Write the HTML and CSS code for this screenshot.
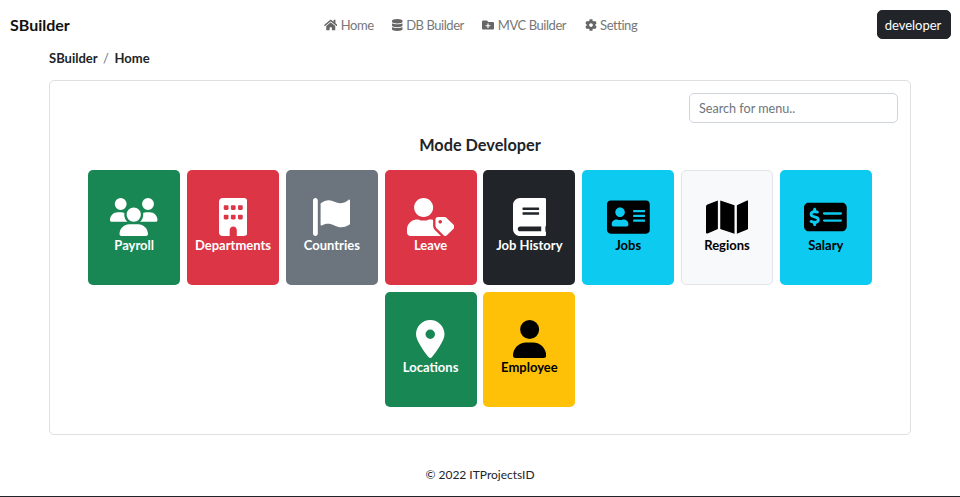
FILE: index.html
```html
<!DOCTYPE html>
<html lang="en">
<head>
<meta charset="utf-8">
<title>SBuilder</title>
<link rel="stylesheet" href="styles.css">
</head>
<body>
<nav class="navbar">
  <a class="brand">SBuilder</a>
  <ul class="menu">
    <li class="menu-item"><svg class="menu-icon" viewBox="0 0 576 512"><path d="M280.37 148.26L96 300.11V464a16 16 0 0 0 16 16l112.06-.29a16 16 0 0 0 15.92-16V368a16 16 0 0 1 16-16h64a16 16 0 0 1 16 16v95.64a16 16 0 0 0 16 16.05L464 480a16 16 0 0 0 16-16V300L295.67 148.26a12.19 12.19 0 0 0-15.3 0zM571.6 251.47L488 182.56V44.05a12 12 0 0 0-12-12h-56a12 12 0 0 0-12 12v72.61L318.47 43a48 48 0 0 0-61 0L4.34 251.47a12 12 0 0 0-1.6 16.9l25.5 31A12 12 0 0 0 45.15 301l235.22-193.74a12.19 12.19 0 0 1 15.3 0L530.9 301a12 12 0 0 0 16.9-1.6l25.5-31a12 12 0 0 0-1.7-16.93z"/></svg>Home</li>
    <li class="menu-item"><svg class="menu-icon" viewBox="0 0 448 512"><path d="M448 73.143v45.714C448 159.143 347.667 192 224 192S0 159.143 0 118.857V73.143C0 32.857 100.333 0 224 0s224 32.857 224 73.143zM448 176v102.857C448 319.143 347.667 352 224 352S0 319.143 0 278.857V176c48.125 33.143 136.208 48.572 224 48.572S399.874 209.143 448 176zm0 160v102.857C448 479.143 347.667 512 224 512S0 479.143 0 438.857V336c48.125 33.143 136.208 48.572 224 48.572S399.874 369.143 448 336z"/></svg>DB Builder</li>
    <li class="menu-item"><svg class="menu-icon" viewBox="0 0 512 512"><path d="M464,128H272L208,64H48A48,48,0,0,0,0,112V400a48,48,0,0,0,48,48H464a48,48,0,0,0,48-48V176A48,48,0,0,0,464,128ZM359.5,296a16,16,0,0,1-16,16h-64v64a16,16,0,0,1-16,16h-16a16,16,0,0,1-16-16V312h-64a16,16,0,0,1-16-16V280a16,16,0,0,1,16-16h64V200a16,16,0,0,1,16-16h16a16,16,0,0,1,16,16v64h64a16,16,0,0,1,16,16Z"/></svg>MVC Builder</li>
    <li class="menu-item"><svg class="menu-icon" viewBox="0 0 512 512"><path d="M487.4 315.7l-42.6-24.6c4.3-23.2 4.3-47 0-70.2l42.6-24.6c4.9-2.8 7.1-8.6 5.5-14-11.1-35.6-30-67.8-54.7-94.6-3.8-4.1-10-5.1-14.8-2.3L380.8 110c-17.9-15.4-38.5-27.3-60.8-35.1V25.8c0-5.6-3.9-10.5-9.4-11.7-36.7-8.2-74.3-7.8-109.2 0-5.5 1.2-9.4 6.1-9.4 11.7V75c-22.2 7.9-42.8 19.8-60.8 35.1L88.7 85.5c-4.9-2.8-11-1.9-14.8 2.3-24.7 26.7-43.6 58.9-54.7 94.6-1.7 5.4.6 11.2 5.5 14L67.3 221c-4.3 23.2-4.3 47 0 70.2l-42.6 24.6c-4.9 2.8-7.1 8.6-5.5 14 11.1 35.6 30 67.8 54.7 94.6 3.8 4.1 10 5.1 14.8 2.3l42.6-24.6c17.9 15.4 38.5 27.3 60.8 35.1v49.2c0 5.6 3.9 10.5 9.4 11.7 36.7 8.2 74.3 7.8 109.2 0 5.5-1.2 9.4-6.1 9.4-11.7v-49.2c22.2-7.9 42.8-19.8 60.8-35.1l42.6 24.6c4.9 2.8 11 1.9 14.8-2.3 24.7-26.7 43.6-58.9 54.7-94.6 1.5-5.5-.7-11.3-5.6-14.1zM256 336c-44.1 0-80-35.9-80-80s35.9-80 80-80 80 35.9 80 80-35.9 80-80 80z"/></svg>Setting</li>
  </ul>
  <button class="user-button" type="button">developer</button>
</nav>
<main class="content">
  <ol class="breadcrumb">
    <li>SBuilder</li>
    <li class="crumb-sep">/</li>
    <li>Home</li>
  </ol>
  <section class="panel">
    <div class="search-row"><input class="search" type="text" placeholder="Search for menu.."></div>
    <h1 class="panel-title">Mode Developer</h1>
    <div class="tiles">
      <a class="tile tile-green">
        <svg class="tile-icon" viewBox="0 0 640 512"><path d="M144 0a80 80 0 1 1 0 160A80 80 0 1 1 144 0zM512 0a80 80 0 1 1 0 160A80 80 0 1 1 512 0zM0 298.700C0 239.800 47.800 192 106.700 192h42.700c15.900 0 31 3.500 44.600 9.700c-1.300 7.200-1.900 14.700-1.900 22.300c0 38.200 16.800 72.500 43.300 96c-.2 0-.4 0-.7 0H21.300C9.600 320 0 310.400 0 298.700zM405.300 320c-.2 0-.4 0-.7 0c26.600-23.500 43.300-57.800 43.300-96c0-7.600-.7-15-1.900-22.300c13.600-6.300 28.700-9.700 44.600-9.700h42.700C592.200 192 640 239.800 640 298.700c0 11.800-9.600 21.300-21.300 21.300H405.300zM224 224a96 96 0 1 1 192 0 96 96 0 1 1 -192 0zM128 485.300C128 411.700 187.700 352 261.300 352H378.700C452.300 352 512 411.700 512 485.300c0 14.700-11.900 26.700-26.700 26.700H154.700c-14.700 0-26.700-11.900-26.700-26.700z"/></svg>
        <span class="tile-label">Payroll</span>
      </a>
      <a class="tile tile-red">
        <svg class="tile-icon" viewBox="0 0 384 512"><path d="M48 0C21.500 0 0 21.500 0 48V464c0 26.500 21.500 48 48 48h96V432c0-26.500 21.500-48 48-48s48 21.500 48 48v80h96c26.500 0 48-21.500 48-48V48c0-26.500-21.500-48-48-48H48zM64 240c0-8.800 7.200-16 16-16h32c8.800 0 16 7.200 16 16v32c0 8.800-7.200 16-16 16H80c-8.800 0-16-7.200-16-16V240zm112-16h32c8.800 0 16 7.200 16 16v32c0 8.800-7.200 16-16 16H176c-8.800 0-16-7.200-16-16V240c0-8.800 7.200-16 16-16zm80 16c0-8.800 7.200-16 16-16h32c8.800 0 16 7.200 16 16v32c0 8.800-7.200 16-16 16H272c-8.800 0-16-7.200-16-16V240zM80 96h32c8.800 0 16 7.200 16 16v32c0 8.800-7.200 16-16 16H80c-8.800 0-16-7.200-16-16V112c0-8.800 7.200-16 16-16zm80 16c0-8.800 7.200-16 16-16h32c8.800 0 16 7.200 16 16v32c0 8.800-7.200 16-16 16H176c-8.800 0-16-7.200-16-16V112zM272 96h32c8.800 0 16 7.200 16 16v32c0 8.800-7.200 16-16 16H272c-8.800 0-16-7.200-16-16V112c0-8.800 7.200-16 16-16z"/></svg>
        <span class="tile-label">Departments</span>
      </a>
      <a class="tile tile-gray">
        <svg class="tile-icon" viewBox="0 0 37 38"><path d="M2.400 0C3.700 0 4.800 1.100 4.800 2.400V35.600C4.800 36.900 3.700 38 2.400 38S0 36.900 0 35.600V2.400C0 1.100 1.100 0 2.400 0zM7.600 5.500C12.500 1.800 17 1.400 21.500 3.800C26 6 31 5.600 35.400 1.900C36.100 1.300 37 1.700 37 2.600V25.400C37 26 36.800 26.400 36.300 26.800C31 30 26 30 21.500 27.500C17 25.200 12.500 25.200 8.900 27.400C8.300 27.900 7.600 27.500 7.600 26.800z"/></svg>
        <span class="tile-label">Countries</span>
      </a>
      <a class="tile tile-red">
        <svg class="tile-icon" viewBox="0 0 640 512"><path d="M630.600 364.900l-90.300-90.200c-12-12-28.300-18.700-45.300-18.700h-79.300c-17.700 0-32 14.300-32 32v79.200c0 17 6.700 33.200 18.700 45.200l90.300 90.200c12.500 12.500 32.800 12.500 45.300 0l92.500-92.500c12.600-12.400 12.600-32.700.1-45.200zm-182.800-21c-13.300 0-24-10.700-24-24s10.700-24 24-24 24 10.700 24 24c0 13.200-10.700 24-24 24zM224 256c70.700 0 128-57.300 128-128C352 57.300 294.700 0 224 0S96 57.300 96 128c0 70.600 57.300 128 128 128zM134.400 288h16.700c22.300 10.200 46.900 16 72.900 16s50.600-5.800 72.900-16h16.700c12 0 23.500 1.900 37.800 5.400v73.700c0 25.500 10.100 49.900 28.100 67.900L457 512H48c-26.500 0-48-21.500-48-48v-41.600C0 348.200 60.200 288 134.400 288z"/></svg>
        <span class="tile-label">Leave</span>
      </a>
      <a class="tile tile-dark">
        <svg class="tile-icon" viewBox="0 0 448 512"><path d="M448 360V24c0-13.300-10.700-24-24-24H96C43 0 0 43 0 96v320c0 53 43 96 96 96h328c13.300 0 24-10.700 24-24v-16c0-7.500-3.500-14.300-8.900-18.700-4.200-15.400-4.200-59.300 0-74.700 5.400-4.300 8.900-11.100 8.900-18.600zM128 134c0-3.300 2.700-6 6-6h212c3.300 0 6 2.700 6 6v20c0 3.300-2.700 6-6 6H134c-3.300 0-6-2.700-6-6v-20zm0 64c0-3.300 2.700-6 6-6h212c3.300 0 6 2.700 6 6v20c0 3.300-2.700 6-6 6H134c-3.300 0-6-2.700-6-6v-20zm253.400 250H96c-17.700 0-32-14.300-32-32 0-17.600 14.400-32 32-32h285.400c-1.900 17.100-1.900 46.900 0 64z"/></svg>
        <span class="tile-label">Job History</span>
      </a>
      <a class="tile tile-cyan">
        <svg class="tile-icon" viewBox="0 0 576 512"><path d="M528 32H48C21.500 32 0 53.500 0 80v352c0 26.500 21.500 48 48 48h480c26.500 0 48-21.500 48-48V80c0-26.500-21.500-48-48-48zm-352 96c35.300 0 64 28.700 64 64s-28.700 64-64 64-64-28.700-64-64 28.700-64 64-64zm112 236.800c0 10.600-10 19.200-22.400 19.200H86.400C74 384 64 375.400 64 364.800v-19.200c0-31.800 30.100-57.600 67.200-57.600h5c12.300 5.100 25.700 8 39.800 8s27.600-2.900 39.800-8h5c37.100 0 67.200 25.800 67.200 57.600v19.200zM512 312c0 4.400-3.600 8-8 8H360c-4.400 0-8-3.600-8-8v-16c0-4.400 3.600-8 8-8h144c4.400 0 8 3.600 8 8v16zm0-64c0 4.400-3.600 8-8 8H360c-4.400 0-8-3.600-8-8v-16c0-4.400 3.600-8 8-8h144c4.400 0 8 3.600 8 8v16zm0-64c0 4.400-3.600 8-8 8H360c-4.400 0-8-3.600-8-8v-16c0-4.400 3.600-8 8-8h144c4.400 0 8 3.600 8 8v16z"/></svg>
        <span class="tile-label">Jobs</span>
      </a>
      <a class="tile tile-light">
        <svg class="tile-icon" viewBox="0 0 576 512"><path d="M0 117.660v346.320c0 11.320 11.430 19.060 21.940 14.860L160 416V32L20.120 87.950A32.006 32.006 0 0 0 0 117.660zM192 416l192 64V96L192 32v384zM554.060 33.160L416 96v384l139.880-55.950A31.996 31.996 0 0 0 576 394.340V48.020c0-11.320-11.430-19.060-21.940-14.860z"/></svg>
        <span class="tile-label">Regions</span>
      </a>
      <a class="tile tile-cyan">
        <svg class="tile-icon" viewBox="0 0 576 512"><path d="M64 64C28.700 64 0 92.700 0 128V384c0 35.300 28.700 64 64 64H512c35.300 0 64-28.700 64-64V128c0-35.300-28.700-64-64-64H64zM272 192H496c8.800 0 16 7.200 16 16s-7.200 16-16 16H272c-8.800 0-16-7.200-16-16s7.200-16 16-16zM256 304c0-8.800 7.200-16 16-16H496c8.800 0 16 7.200 16 16s-7.200 16-16 16H272c-8.800 0-16-7.200-16-16zM164 152v13.900c7.500 1.200 14.600 2.900 21.100 4.700c10.700 2.800 17 13.800 14.200 24.500s-13.800 17-24.500 14.200c-11-2.900-21.600-5-31.200-5.200c-7.900-.1-16 1.800-21.500 5c-4.800 2.800-6.200 5.600-6.200 9.300c0 1.800 .1 3.500 5.300 6.700c6.300 3.800 15.500 6.700 28.300 10.500l.7 .2c11.200 3.400 25.600 7.700 37.100 15c12.900 8.100 24.300 21.300 24.600 41.600c.3 20.900-10.500 36.100-24.800 45c-7.200 4.500-15.200 7.300-23.200 9V360c0 11-9 20-20 20s-20-9-20-20V345.400c-10.300-2.200-20-5.500-28.200-8.400l0 0 0 0c-2.100-.7-4.100-1.400-6.100-2.100c-10.500-3.500-16.100-14.800-12.600-25.300s14.800-16.100 25.300-12.600c2.500 .8 4.900 1.700 7.200 2.400c13.600 4.600 24 8.100 35.100 8.500c8.600 .3 16.500-1.600 21.400-4.700c4.100-2.500 6-5.500 5.900-10.500c0-2.900-.8-5-5.900-8.200c-6.300-4-15.400-6.900-28-10.700l-1.700-.5c-10.900-3.300-24.600-7.400-35.600-14c-12.700-7.700-24.600-20.500-24.700-40.700c-.1-21.100 11.800-35.700 25.800-43.900c6.900-4.100 14.500-6.800 22.200-8.500V152c0-11 9-20 20-20s20 9 20 20z"/></svg>
        <span class="tile-label">Salary</span>
      </a>
      <a class="tile tile-green">
        <svg class="tile-icon" viewBox="0 0 384 512"><path d="M215.700 499.200C267 435 384 279.400 384 192C384 86 298 0 192 0S0 86 0 192c0 87.400 117 243 168.300 307.200c12.300 15.300 35.100 15.300 47.400 0zM192 128a64 64 0 1 1 0 128 64 64 0 1 1 0-128z"/></svg>
        <span class="tile-label">Locations</span>
      </a>
      <a class="tile tile-yellow">
        <svg class="tile-icon" viewBox="0 0 448 512"><path d="M224 256A128 128 0 1 0 224 0a128 128 0 1 0 0 256zm-45.700 48C79.800 304 0 383.800 0 482.300C0 498.700 13.300 512 29.700 512H418.300c16.400 0 29.700-13.300 29.700-29.700C448 383.800 368.200 304 269.700 304H178.300z"/></svg>
        <span class="tile-label">Employee</span>
      </a>
    </div>
  </section>
</main>
<footer class="footer">© 2022 ITProjectsID</footer>
</body>
</html>
```

FILE: styles.css
```css
* { box-sizing: border-box; }

html, body { height: 100%; }

body {
  margin: 0;
  height: 497px;
  overflow: hidden;
  display: flex;
  flex-direction: column;
  background: #fff;
  color: #212529;
  font-family: "Lato", "Open Sans", sans-serif;
  font-size: 14.500px;
}

.navbar {
  display: grid;
  grid-template-columns: 1fr auto 1fr;
  align-items: center;
  height: 49px;
  padding: 0 9px 0 10px;
}

.brand {
  font-size: 16px;
  font-weight: 700;
  color: #111;
}

.menu {
  display: flex;
  gap: 18.500px;
  margin: 0;
  padding: 1px 0 0;
  list-style: none;
}

.menu-item {
  display: flex;
  align-items: center;
  gap: 3.500px;
  font-size: 13px;
  letter-spacing: -0.450px;
  color: #777;
}

.menu-icon {
  height: 12px;
  fill: #666;
}

.user-button {
  justify-self: end;
  width: 74px;
  height: 29px;
  padding: 0 2px 0 0;
  border: 1px solid #212529;
  border-radius: 5px;
  background: #212529;
  color: #fff;
  font: inherit;
  font-size: 13px;
}

.content {
  display: flex;
  flex-direction: column;
  padding: 0 49px;
}

.breadcrumb {
  display: flex;
  gap: 5.500px;
  align-items: center;
  height: 20px;
  margin: -1px 0 12px;
  padding: 0;
  list-style: none;
  font-size: 13px;
  font-weight: 700;
}

.crumb-sep {
  font-weight: 400;
  color: #6c757d;
}

.panel {
  height: 355px;
  padding: 12px 12px 0;
  border: 1px solid #dfdfdf;
  border-radius: 5px;
}

.search-row {
  display: flex;
  justify-content: flex-end;
}

.search {
  width: 209px;
  height: 30px;
  padding: 0 9px;
  border: 1px solid #ced4da;
  border-radius: 5px;
  font: inherit;
  font-size: 12.600px;
}

.search::placeholder {
  color: #6c757d;
  opacity: 1;
}

.panel-title {
  margin: 11px 0 14px;
  font-size: 16.300px;
  line-height: 22px;
  font-weight: 700;
  text-align: center;
}

.tiles {
  display: flex;
  flex-wrap: wrap;
  justify-content: center;
  gap: 7px 6.800px;
}

.tile {
  display: flex;
  flex-direction: column;
  align-items: center;
  width: 92px;
  height: 115px;
  padding-top: 27px;
  border: 1px solid transparent;
  border-radius: 5px;
  font-size: 13px;
  font-weight: 700;
}

.tile-icon {
  height: 38px;
  fill: currentColor;
}

.tile-label {
  line-height: 19px;
}

.tile-green { background: #198754; color: #fff; }
.tile-red { background: #dc3545; color: #fff; }
.tile-gray { background: #6c757d; color: #fff; }
.tile-dark { background: #212529; color: #fff; }
.tile-cyan { background: #0dcaf0; color: #000; }
.tile-light { background: #f8f9fa; color: #000; border-color: #e3e5e8; }
.tile-yellow { background: #ffc107; color: #000; }

.footer {
  margin-top: auto;
  height: 43px;
  padding-top: 13px;
  border-bottom: 1px solid #212529;
  text-align: center;
  font-size: 12px;
}
```
